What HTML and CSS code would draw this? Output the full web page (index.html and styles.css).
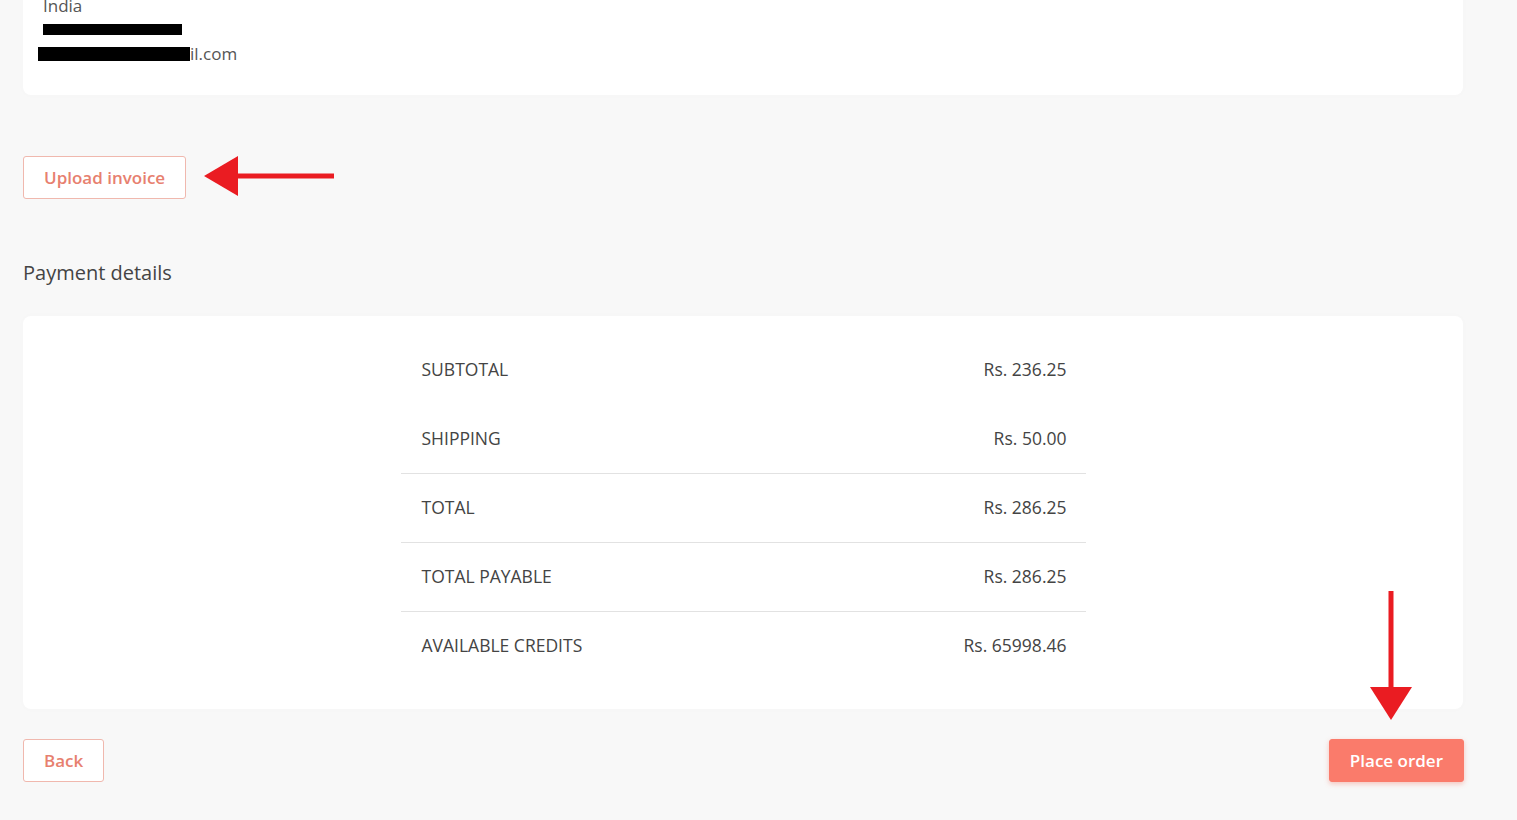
FILE: index.html
```html
<!DOCTYPE html>
<html>
<head>
<meta charset="utf-8">
<link rel="stylesheet" href="styles.css">
</head>
<body>
<div class="page">
  <section class="card address">
    <div class="line">India</div>
    <div class="line"><span class="redact r1"></span></div>
    <div class="line email"><span class="redact r2"></span>il.com</div>
  </section>

  <div class="upload-row">
    <button class="btn btn-outline">Upload invoice</button>
    <svg class="arrow-left" width="132" height="44" viewBox="0 0 132 44">
      <polygon points="0,22 34,2 34,42" fill="#ea1c22"/>
      <rect x="30" y="19.5" width="100" height="5" fill="#ea1c22"/>
    </svg>
  </div>

  <h2 class="section-title">Payment details</h2>

  <section class="card payment">
    <div class="summary">
      <div class="row"><span>SUBTOTAL</span><span>Rs. 236.25</span></div>
      <div class="row"><span>SHIPPING</span><span>Rs. 50.00</span></div>
      <div class="row sep"><span>TOTAL</span><span>Rs. 286.25</span></div>
      <div class="row sep"><span>TOTAL PAYABLE</span><span>Rs. 286.25</span></div>
      <div class="row sep"><span>AVAILABLE CREDITS</span><span>Rs. 65998.46</span></div>
    </div>
  </section>

  <div class="actions">
    <button class="btn btn-outline">Back</button>
    <div class="place-wrap">
      <svg class="arrow-down" width="44" height="132" viewBox="0 0 44 132">
        <rect x="19.5" y="0" width="5" height="100" fill="#ea1c22"/>
        <polygon points="1,96 43,96 22,129" fill="#ea1c22"/>
      </svg>
      <button class="btn btn-primary">Place order</button>
    </div>
  </div>
</div>
</body>
</html>
```
FILE: styles.css
```css
* { box-sizing: border-box; }
html, body {
  margin: 0;
  padding: 0;
  background: #f8f8f8;
  font-family: "Open Sans", "Liberation Sans", sans-serif;
  color: #444;
  overflow: hidden;
}
.page {
  width: 1517px;
  height: 820px;
  padding: 0 54px 0 23px;
}
.card {
  background: #fff;
  border-radius: 8px;
  box-shadow: 0 0 10px rgba(0,0,0,0.015);
}
.address {
  margin-top: -28px;
  padding: 22px 20px 29px 20px;
  height: 123px;
}
.line {
  height: 24px;
  line-height: 24px;
  font-size: 17px;
  color: #555;
}
.redact {
  display: inline-block;
  background: #000;
  vertical-align: top;
}
.r1 { width: 139px; height: 11px; margin-top: 6px; }
.email { display: flex; align-items: center; margin-left: -5px; }
.r2 { width: 152px; height: 14px; }
.upload-row {
  display: flex;
  align-items: center;
  margin-top: 61px;
  height: 43px;
}
.arrow-left { margin-left: 18px; margin-top: -4px; }
.btn {
  font-family: "Open Sans", "Liberation Sans", sans-serif;
  font-size: 17px;
  font-weight: 600;
  height: 43px;
  border-radius: 3px;
  padding: 0 20px;
  cursor: pointer;
}
.btn-outline {
  background: #fff;
  border: 1px solid #f0b8ae;
  color: #e7806f;
}
.btn-primary {
  background: #fa7b6b;
  border: 1px solid #fa7b6b;
  color: #fff;
  box-shadow: 0 2px 5px rgba(240, 100, 80, 0.35);
  padding: 0 20px;
}
.section-title {
  margin: 61px 0 0 0;
  font-size: 20px;
  font-weight: 400;
  color: #444;
  line-height: 26px;
}
.payment {
  margin-top: 30px;
  width: 1440px;
  height: 393px;
  padding: 19px 0 30px;
  display: flex;
  justify-content: center;
}
.summary {
  width: 685px;
}
.row {
  display: flex;
  justify-content: space-between;
  align-items: center;
  height: 69px;
  padding: 0 19px 0 21px;
  font-size: 17.5px;
  color: #444;
}
.row > span { transform: translateY(-1px); }
.row.sep { border-top: 1px solid #e2e2e2; }
.actions {
  display: flex;
  justify-content: space-between;
  margin-top: 30px;
  width: 1441px;
}
.place-wrap { position: relative; }
.arrow-down {
  position: absolute;
  left: 40px;
  top: -148px;
}
```
